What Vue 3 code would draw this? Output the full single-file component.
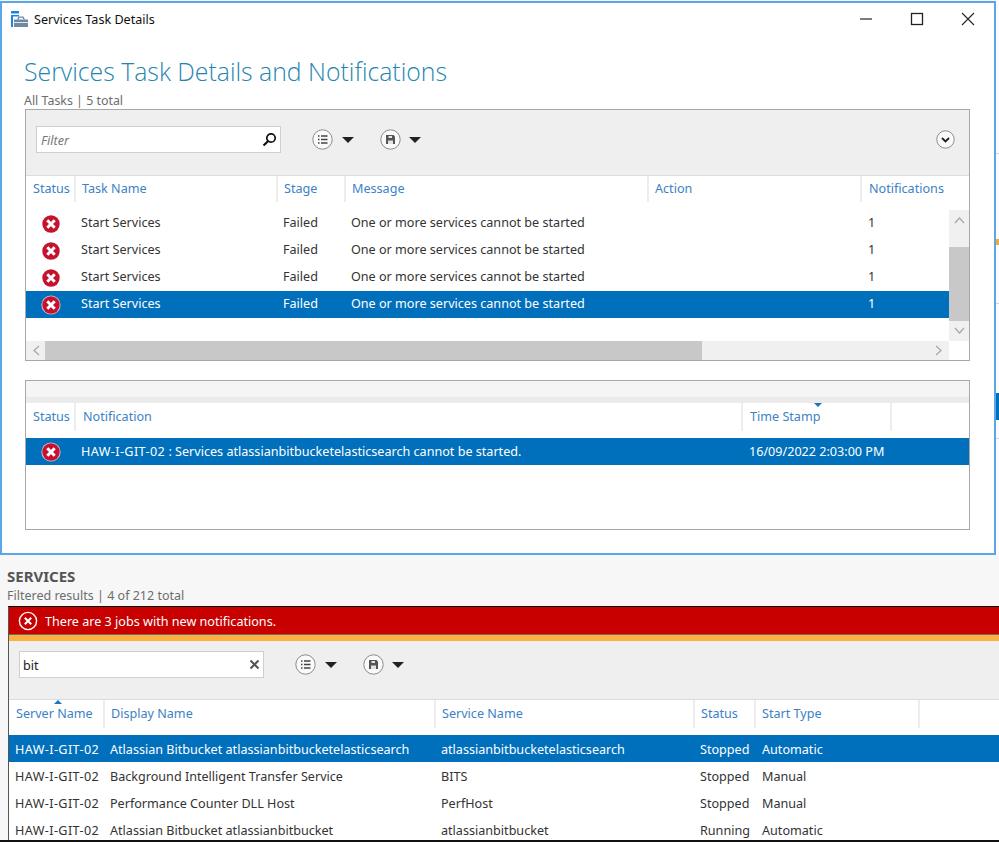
<template>
  <div class="screen">
    <!-- strip of the main window showing behind the dialog -->
    <div class="behind">
      <i class="b-line" style="top: 153px"></i>
      <i class="b-orange"></i>
      <i class="b-line" style="top: 303px"></i>
      <i class="b-blue"></i>
      <i class="b-line" style="top: 438px"></i>
    </div>

    <div class="window">
      <div class="titlebar">
        <svg class="app-icon" width="17" height="16" viewBox="0 0 17 16">
          <rect x="0" y="0" width="8" height="2.500" fill="#1a86d9" />
          <path d="M0 4h8v1.500H2V16H0z" fill="#1a86d9" />
          <rect x="3" y="8.500" width="14" height="7.500" fill="#6f8ba3" />
          <path d="M6 8.500l1.500-3h5l1.500 3h-1.500l-1-1.800h-3l-1 1.800z" fill="#6f8ba3" />
          <rect x="3" y="11" width="14" height="1" fill="#dfe8ef" />
        </svg>
        <span class="win-title">Services Task Details</span>
        <div class="win-btns">
          <svg width="14" height="14" viewBox="0 0 14 14"><path d="M1 7h12" stroke="#333" stroke-width="1.300" /></svg>
          <svg width="14" height="14" viewBox="0 0 14 14"><rect x="1.500" y="1.500" width="11" height="11" fill="none" stroke="#222" stroke-width="1.300" /></svg>
          <svg width="14" height="14" viewBox="0 0 14 14"><path d="M1 1l12 12M13 1L1 13" stroke="#222" stroke-width="1.100" /></svg>
        </div>
      </div>

      <h1 class="heading">Services Task Details and Notifications</h1>
      <div class="subhead">All Tasks | 5 total</div>

      <section class="panel tasks">
        <div class="toolbar">
          <div class="search">
            <span class="placeholder">Filter</span>
            <svg width="15" height="15" viewBox="0 0 15 15">
              <circle cx="9" cy="6" r="4.200" fill="none" stroke="#111" stroke-width="1.700" />
              <path d="M6 9.200L1.500 13.500" stroke="#111" stroke-width="2.200" />
            </svg>
          </div>
          <div class="tool-btns">
            <div class="tool">
              <svg class="circ" width="21" height="21" viewBox="0 0 21 21">
                <circle cx="10.500" cy="10.500" r="9.700" fill="#fafafa" stroke="#8a8a8a" />
                <path d="M6 7h1.500M6 10.500h1.500M6 14h1.500M9 7h6.500M9 10.500h6.500M9 14h6.500" stroke="#444" stroke-width="1.600" />
              </svg>
              <i class="caret"></i>
            </div>
            <div class="tool">
              <svg class="circ" width="21" height="21" viewBox="0 0 21 21">
                <circle cx="10.500" cy="10.500" r="9.700" fill="#fafafa" stroke="#8a8a8a" />
                <path d="M6 6h7.500L15 7.500V15H6z" fill="#555" />
                <rect x="8.500" y="7" width="3.500" height="2" fill="#e4e4e4" />
                <rect x="8" y="11.500" width="5" height="3.500" fill="#e4e4e4" />
              </svg>
              <i class="caret"></i>
            </div>
          </div>
          <svg class="expand" width="19" height="19" viewBox="0 0 19 19">
            <circle cx="9.500" cy="9.500" r="8.700" fill="#fafafa" stroke="#8a8a8a" />
            <path d="M6 8l3.500 3.500L13 8" fill="none" stroke="#222" stroke-width="1.800" />
          </svg>
        </div>

        <div class="head task-cols">
          <span v-for="c in taskCols" :key="c">{{ c }}</span>
        </div>

        <div class="task-body">
          <div class="task-rows">
            <div v-for="(t, i) in tasks" :key="i" class="row task-cols" :class="{ selected: i === 3 }">
              <span class="status-cell">
                <svg class="err" width="20" height="20" viewBox="0 0 20 20">
                  <circle cx="10" cy="10" r="9.600" :fill="i === 3 ? '#d9c6cc' : '#fff'" />
                  <circle cx="10" cy="10" r="8.700" fill="#c4122f" />
                  <path d="M6.300 6.300l7.400 7.400M13.700 6.300l-7.400 7.400" stroke="#fff" stroke-width="3" />
                </svg>
              </span>
              <span>{{ t.name }}</span>
              <span>{{ t.stage }}</span>
              <span>{{ t.message }}</span>
              <span></span>
              <span>{{ t.count }}</span>
            </div>
          </div>
          <div class="vscroll">
            <svg width="11" height="7" viewBox="0 0 11 7"><path d="M1 6l4.500-5L10 6" fill="none" stroke="#a6a6a6" stroke-width="1.200" /></svg>
            <div class="vthumb"></div>
            <svg width="11" height="7" viewBox="0 0 11 7"><path d="M1 1l4.500 5L10 1" fill="none" stroke="#a6a6a6" stroke-width="1.200" /></svg>
          </div>
        </div>

        <div class="hscroll-wrap">
          <div class="hscroll">
            <svg width="7" height="11" viewBox="0 0 7 11"><path d="M6 1L1 5.500 6 10" fill="none" stroke="#a6a6a6" stroke-width="1.200" /></svg>
            <div class="hthumb"></div>
            <svg width="7" height="11" viewBox="0 0 7 11"><path d="M1 1l5 4.500L1 10" fill="none" stroke="#a6a6a6" stroke-width="1.200" /></svg>
          </div>
        </div>
      </section>

      <section class="panel notes">
        <div class="notes-strip"></div>
        <div class="head note-cols">
          <span>Status</span>
          <span>Notification</span>
          <span class="sorted">Time Stamp<i class="sort-down"></i></span>
          <span></span>
        </div>
        <div class="row note-cols selected">
          <span class="status-cell">
            <svg class="err" width="20" height="20" viewBox="0 0 20 20">
              <circle cx="10" cy="10" r="9.600" fill="#d9c6cc" />
              <circle cx="10" cy="10" r="8.700" fill="#c4122f" />
              <path d="M6.300 6.300l7.400 7.400M13.700 6.300l-7.400 7.400" stroke="#fff" stroke-width="3" />
            </svg>
          </span>
          <span><span class="host">HAW-I-GIT-02</span> : Services atlassianbitbucketelasticsearch cannot be started.</span>
          <span>16/09/2022 2:03:00 PM</span>
          <span></span>
        </div>
      </section>
    </div>

    <div class="services">
      <h2>SERVICES</h2>
      <div class="services-sub">Filtered results | 4 of 212 total</div>
      <div class="services-box">
        <div class="alert">
          <svg width="20" height="20" viewBox="0 0 20 20">
            <circle cx="10" cy="10" r="8.600" fill="none" stroke="#fff" stroke-width="1.400" />
            <path d="M6.800 6.800l6.400 6.400M13.200 6.800l-6.400 6.400" stroke="#fff" stroke-width="2" />
          </svg>
          <span>There are 3 jobs with new notifications.</span>
        </div>
        <div class="alert-edge"></div>
        <div class="toolbar svc-toolbar">
          <div class="search">
            <span class="typed">bit</span>
            <svg width="11" height="11" viewBox="0 0 11 11"><path d="M1.500 1.500l8 8M9.500 1.500l-8 8" stroke="#555" stroke-width="2" /></svg>
          </div>
          <div class="tool-btns">
            <div class="tool">
              <svg class="circ" width="21" height="21" viewBox="0 0 21 21">
                <circle cx="10.500" cy="10.500" r="9.700" fill="#fafafa" stroke="#8a8a8a" />
                <path d="M6 7h1.500M6 10.500h1.500M6 14h1.500M9 7h6.500M9 10.500h6.500M9 14h6.500" stroke="#444" stroke-width="1.600" />
              </svg>
              <i class="caret"></i>
            </div>
            <div class="tool">
              <svg class="circ" width="21" height="21" viewBox="0 0 21 21">
                <circle cx="10.500" cy="10.500" r="9.700" fill="#fafafa" stroke="#8a8a8a" />
                <path d="M6 6h7.500L15 7.500V15H6z" fill="#555" />
                <rect x="8.500" y="7" width="3.500" height="2" fill="#e4e4e4" />
                <rect x="8" y="11.500" width="5" height="3.500" fill="#e4e4e4" />
              </svg>
              <i class="caret"></i>
            </div>
          </div>
        </div>
        <div class="head svc-cols">
          <span class="sorted">Server Name<i class="sort-up"></i></span>
          <span>Display Name</span>
          <span>Service Name</span>
          <span>Status</span>
          <span>Start Type</span>
          <span></span>
        </div>
        <div v-for="(s, i) in services" :key="s.service" class="row svc-cols" :class="{ selected: i === 0 }">
          <span class="host">{{ s.server }}</span>
          <span>{{ s.display }}</span>
          <span>{{ s.service }}</span>
          <span>{{ s.status }}</span>
          <span>{{ s.start }}</span>
          <span></span>
        </div>
      </div>
    </div>
    <div class="bottom-line"></div>
  </div>
</template>

<script setup>
const taskCols = ['Status', 'Task Name', 'Stage', 'Message', 'Action', 'Notifications']

const tasks = Array.from({ length: 4 }, () => ({
  name: 'Start Services',
  stage: 'Failed',
  message: 'One or more services cannot be started',
  count: 1,
}))

const services = [
  {
    server: 'HAW-I-GIT-02',
    display: 'Atlassian Bitbucket atlassianbitbucketelasticsearch',
    service: 'atlassianbitbucketelasticsearch',
    status: 'Stopped',
    start: 'Automatic',
  },
  {
    server: 'HAW-I-GIT-02',
    display: 'Background Intelligent Transfer Service',
    service: 'BITS',
    status: 'Stopped',
    start: 'Manual',
  },
  {
    server: 'HAW-I-GIT-02',
    display: 'Performance Counter DLL Host',
    service: 'PerfHost',
    status: 'Stopped',
    start: 'Manual',
  },
  {
    server: 'HAW-I-GIT-02',
    display: 'Atlassian Bitbucket atlassianbitbucket',
    service: 'atlassianbitbucket',
    status: 'Running',
    start: 'Automatic',
  },
]
</script>

<style>
html,
body {
  margin: 0;
  background: #f7f7f7;
}
</style>

<style scoped>
.screen {
  position: relative;
  width: 999px;
  height: 842px;
  overflow: hidden;
  background: #f7f7f7;
  font-family: 'Noto Sans', 'Open Sans', sans-serif;
  font-size: 12.6px;
  color: #333;
  display: flex;
  flex-direction: column;
}

.behind {
  position: absolute;
  top: 0;
  right: 0;
  width: 4px;
  height: 555px;
  background: #fbfbfb;
}

.b-line {
  position: absolute;
  left: 0;
  right: 0;
  height: 1px;
  background: #d4d4d4;
}

.b-orange {
  position: absolute;
  left: 0;
  right: 0;
  top: 239px;
  height: 6px;
  background: #f5a83a;
}

.b-blue {
  position: absolute;
  left: 0;
  right: 0;
  top: 393px;
  height: 27px;
  background: #0070bd;
}

.window {
  position: relative;
  box-sizing: border-box;
  width: 996px;
  height: 554px;
  margin-top: 1px;
  flex: none;
  background: #fff;
  border: 2px solid #5aa6e8;
  display: flex;
  flex-direction: column;
}

.titlebar {
  height: 32px;
  flex: none;
  display: flex;
  align-items: center;
  padding-left: 9px;
  padding-right: 19px;
}

.app-icon {
  margin-right: 6px;
}

.win-title {
  color: #111;
}

.win-btns {
  margin-left: auto;
  display: flex;
  gap: 37px;
}

.heading {
  margin: 20px 0 0 22px;
  font-family: 'Open Sans', 'Noto Sans', sans-serif;
  font-size: 24.8px;
  line-height: 32px;
  font-weight: 300;
  color: #2486b0;
}

.subhead {
  margin: 6px 0 0 22px;
  font-size: 12.4px;
  line-height: 16px;
  color: #6d6d6d;
}

.panel {
  box-sizing: border-box;
  width: 945px;
  margin-left: 23px;
  flex: none;
  border: 1px solid #a8a8a8;
  display: flex;
  flex-direction: column;
}

.tasks {
  height: 252px;
}

.notes {
  height: 150px;
  margin-top: 19px;
}

.toolbar {
  flex: none;
  box-sizing: border-box;
  height: 66px;
  padding: 16px 14px 0 10px;
  background: #efefef;
  border-bottom: 1px solid #dcdcdc;
  display: flex;
  align-items: flex-start;
}

.search {
  box-sizing: border-box;
  width: 245px;
  height: 27px;
  background: #fff;
  border: 1px solid #cfcfcf;
  padding: 0 3px 0 4px;
  display: flex;
  align-items: center;
  justify-content: space-between;
}

.placeholder {
  margin-top: 2px;
  font-style: italic;
  color: #777;
}

.typed {
  margin: 2px 0 0 -1px;
  color: #222;
}

.tool-btns {
  display: flex;
  gap: 26px;
  margin-left: 31px;
  margin-top: 3px;
}

.tool {
  display: flex;
  align-items: center;
  gap: 9px;
}

.tool + .tool {
  gap: 8px;
}

.caret {
  width: 0;
  height: 0;
  border-left: 6px solid transparent;
  border-right: 6px solid transparent;
  border-top: 6px solid #222;
}

.expand {
  margin-left: auto;
  margin-top: 4px;
}

.head {
  flex: none;
  height: 34px;
  color: #3c82c4;
  background: #fff;
}

.head > span {
  position: relative;
  height: 26px;
  line-height: 26px;
  padding-left: 6px;
  border-right: 2px solid #ededed;
  box-sizing: border-box;
  white-space: nowrap;
}

.head > span:first-child,
.head > span:last-child {
  padding-left: 7px;
}

.head > span:last-child {
  border-right: 0;
}

.row {
  flex: none;
  height: 27px;
  line-height: 27px;
  color: #333;
}

.row > span {
  padding-left: 5px;
  white-space: nowrap;
  overflow: hidden;
}

.row.selected {
  background: #0070bd;
  color: #fff;
}

/* the reference face sets the host name wider than Noto Sans does */
.host {
  letter-spacing: 0.4px;
}

.task-cols {
  display: grid;
  grid-template-columns: 50px 202px 68px 303px 213px 107px;
}

.note-cols {
  display: grid;
  grid-template-columns: 50px 667px 149px 77px;
}

.svc-cols {
  display: grid;
  grid-template-columns: 96px 331px 259px 61px 164px 1fr;
}

.status-cell {
  display: flex;
  align-items: center;
  justify-content: center;
}

.row > .status-cell {
  padding-left: 0;
}

.task-body {
  flex: 1;
  display: flex;
  min-height: 0;
}

.task-rows {
  flex: 1;
  min-width: 0;
}

.task-rows .task-cols {
  grid-template-columns: 50px 202px 68px 303px 213px 87px;
}

.task-rows .row > span {
  line-height: 25px;
}

.task-rows .row > span:last-child {
  padding-left: 6px;
}

.vscroll {
  width: 20px;
  flex: none;
  background: #f0f0f0;
  display: flex;
  flex-direction: column;
  align-items: center;
  justify-content: space-between;
  padding-top: 7px;
  padding-bottom: 7px;
  box-sizing: border-box;
  position: relative;
}

.vthumb {
  position: absolute;
  left: 0;
  right: 0;
  top: 37px;
  height: 74px;
  background: #c8c8c8;
}

.hscroll-wrap {
  flex: none;
  height: 19px;
  display: flex;
}

.hscroll {
  position: relative;
  flex: 1;
  background: #f0f0f0;
  margin-right: 20px;
  display: flex;
  align-items: center;
  justify-content: space-between;
  padding: 0 7px;
}

.hthumb {
  position: absolute;
  left: 19px;
  width: 657px;
  top: 0;
  bottom: 0;
  background: #c8c8c8;
}

.notes-strip {
  flex: none;
  height: 22px;
  box-sizing: border-box;
  background: #f5f5f5;
  border-bottom: 6px solid #ebebeb;
}

.notes .head {
  height: 35px;
}

.notes .head > span {
  height: 28px;
  line-height: 28px;
  padding-left: 7px;
}

.notes .row > span:nth-child(3) {
  padding-left: 6px;
}

.sort-down,
.sort-up {
  position: absolute;
  width: 0;
  height: 0;
  border-left: 4px solid transparent;
  border-right: 4px solid transparent;
}

.sort-down {
  top: 0;
  left: 71px;
  border-top: 4px solid #1b75bb;
}

.sort-up {
  top: 0;
  left: 45px;
  border-bottom: 4px solid #1b75bb;
}

.services {
  flex: 1;
  min-height: 0;
  display: flex;
  flex-direction: column;
}

.services h2 {
  margin: 12px 0 0 7px;
  font-size: 15px;
  line-height: 18px;
  font-weight: 700;
  color: #555;
}

.services-sub {
  margin: 3px 0 0 7px;
  font-size: 12.5px;
  line-height: 16px;
  color: #6d6d6d;
}

.services-box {
  flex: 1;
  min-height: 0;
  margin: 2px 0 0 8px;
  border-left: 1px solid #555;
  border-top: 1px solid #000;
  background: #fff;
  overflow: hidden;
  display: flex;
  flex-direction: column;
}

.alert {
  flex: none;
  height: 27px;
  background: #c80000;
  color: #fff;
  display: flex;
  align-items: center;
  gap: 7px;
  padding-left: 9px;
}

.alert span {
  margin-top: 2px;
}

.alert-edge {
  flex: none;
  height: 7px;
  box-sizing: border-box;
  background: #fbb040;
  border-top: 1px solid #6b6b6b;
}

.svc-toolbar {
  height: 59px;
  padding: 10px 0 0 10px;
}

.services-box .head {
  height: 35px;
}

.services-box .head > span {
  height: 28px;
  line-height: 28px;
}

.services-box .head > span:nth-child(3),
.services-box .head > span:nth-child(4) {
  padding-left: 6px;
}

.services-box .row > span {
  padding-top: 1px;
}

.services-box .row > span:nth-child(1),
.services-box .row > span:nth-child(5) {
  padding-left: 6px;
}

.bottom-line {
  flex: none;
  height: 2px;
  background: #111;
}
</style>
